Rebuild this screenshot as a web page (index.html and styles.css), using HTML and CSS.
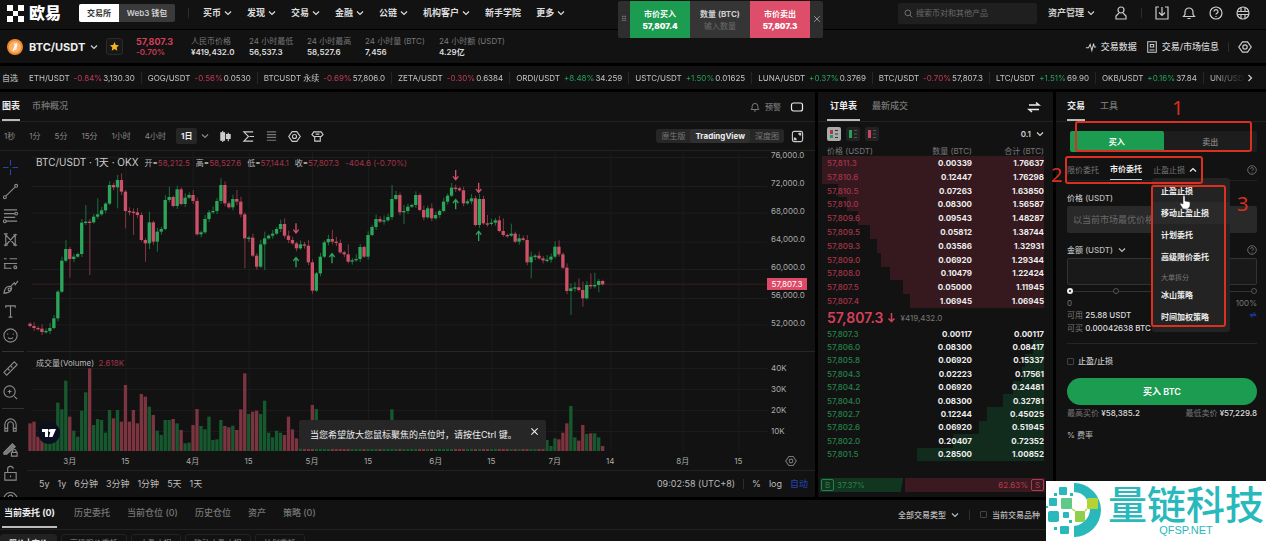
FILE: index.html
```html
<!DOCTYPE html>
<html lang="zh-CN">
  <head>
    <meta charset="utf-8">
    <title>BTC/USDT 57,807.3 | 欧易</title>
    <link rel="stylesheet" href="styles.css">
  </head>
  <body>
    <svg width="0" height="0" class="defs">
      <symbol id="chev" viewBox="0 0 8 8"><path d="M1 2.5l3 3 3-3"/></symbol>
      <symbol id="x" viewBox="0 0 10 10"><path d="M1.5 1.5l7 7M8.5 1.5l-7 7"/></symbol>
      <symbol id="help" viewBox="0 0 14 14"><circle cx="7" cy="7" r="6"/><path d="M5 5.5a2 2 0 1 1 2.8 1.9c-.6.3-.8.6-.8 1.2M7 10v.9"/></symbol>
      <symbol id="gear" viewBox="0 0 14 14"><path d="M4.5 1.8h5l3.7 5.2-3.7 5.2h-5L.8 7z"/><circle cx="7" cy="7" r="2.2"/></symbol>
      <symbol id="bell" viewBox="0 0 14 14"><path d="M1.5 10.5h11L11 8.500V6a4 4 0 0 0-8 0v2.500zM5.500 12.500h3"/></symbol>
    </svg>

    <header class="topbar">
      <a class="logo" href="#">
        <svg width="17" height="17" viewBox="0 0 17 17"><path d="M0 0h6v6h5V0h6v6h-6v5h6v6h-6v-6H6v6H0v-6h6V6H0z"/></svg>
        <span>欧易</span>
      </a>
      <div class="mode"><button class="on">交易所</button><button>Web3 钱包</button></div>
      <i class="sep"></i>
      <nav>
        <a href="#">买币<svg class="chev"><use href="#chev"/></svg></a>
        <a href="#">发现<svg class="chev"><use href="#chev"/></svg></a>
        <a href="#">交易<svg class="chev"><use href="#chev"/></svg></a>
        <a href="#">金融<svg class="chev"><use href="#chev"/></svg></a>
        <a href="#">公链<svg class="chev"><use href="#chev"/></svg></a>
        <a href="#">机构客户<svg class="chev"><use href="#chev"/></svg></a>
        <a href="#">新手学院</a>
        <a href="#">更多<svg class="chev"><use href="#chev"/></svg></a>
      </nav>
      <label class="search">
        <svg class="ico" viewBox="0 0 14 14"><circle cx="6" cy="6" r="4.500"/><path d="M9.500 9.500l3.500 3.500"/></svg>
        <input type="text" aria-label="搜索" placeholder="搜索币对和其他产品">
      </label>
      <a class="assets" href="#">资产管理<svg class="chev"><use href="#chev"/></svg></a>
      <div class="tools">
        <svg class="ico" viewBox="0 0 14 14"><circle cx="7" cy="4" r="3"/><path d="M5 7l-3 3v3h10v-3L9 7"/></svg>
        <i class="sep"></i>
        <svg class="ico" viewBox="0 0 14 14"><path d="M4 1H1v12h12V1h-3M7 1v8M4 6.500l3 3 3-3"/></svg>
        <svg class="ico"><use href="#bell"/></svg>
        <svg class="ico"><use href="#help"/></svg>
        <svg class="ico" viewBox="0 0 14 14"><circle cx="7" cy="7" r="6"/><path d="M1 5.500h12M1 8.500h12M5 1.500v4M9 1.500v4M5 8.500v4M9 8.500v4"/></svg>
      </div>
    </header>

    <div class="quick">
      <span class="grip">⠿</span>
      <button class="buy">市价买入<b>57,807.4</b></button>
      <label>数量 (BTC)<input type="text" placeholder="输入数量"></label>
      <button class="sell">市价卖出<b>57,807.3</b></button>
      <button class="close" aria-label="关闭"><svg class="chev"><use href="#x"/></svg></button>
    </div>

    <section class="ticker">
      <svg class="coin" width="16" height="16" viewBox="0 0 16 16"><circle cx="8" cy="8" r="8" fill="#f08a2c"/><circle cx="8" cy="8" r="6" fill="#f9b06a"/><path d="M9.500 4L6 12M7 5l3 1-1 2-2-.5 2 .5v2l-3 .5" fill="none" stroke="#fff" stroke-width="1.200"/></svg>
      <h1>BTC/USDT</h1>
      <svg class="chev"><use href="#chev"/></svg>
      <button class="star" aria-label="自选"><svg width="9" height="9" viewBox="0 0 10 10"><path d="M5 0l1.500 3.300 3.500.4-2.600 2.400.7 3.500L5 7.900 1.900 9.600l.7-3.500L0 3.700l3.500-.4z" fill="#f5b422"/></svg></button>
      <dl class="stat now"><dt>57,807.3</dt><dd>-0.70%</dd></dl>
      <dl class="stat"><dt>人民币价格</dt><dd>¥419,432.0</dd></dl>
      <dl class="stat"><dt>24 小时最低</dt><dd>56,537.3</dd></dl>
      <dl class="stat"><dt>24 小时最高</dt><dd>58,527.6</dd></dl>
      <dl class="stat wide"><dt>24 小时量 (BTC)</dt><dd>7,456</dd></dl>
      <dl class="stat wide"><dt>24 小时额 (USDT)</dt><dd>4.29亿</dd></dl>
      <div class="info">
        <a href="#"><svg class="ico" viewBox="0 0 14 14"><path d="M1 8h3l2-4 2 7 2-8 1 4h2"/></svg>交易数据</a>
        <a href="#"><svg class="ico" viewBox="0 0 14 14"><path d="M2 1h10v12H2zM4 10.500h6M5 4h4v3H5z"/></svg>交易/市场信息</a>
        <i class="sep"></i>
        <svg class="ico"><use href="#gear"/></svg>
      </div>
    </section>

    <div class="strip"><b>自选</b><ul id="strip"></ul><svg class="chev next"><use href="#chev"/></svg></div>

    <main>
      <div class="left">
        <section class="chart">
          <div class="tabs">
            <a class="on" href="#">图表</a><a href="#">币种概况</a>
            <span class="end"><svg class="ico sm"><use href="#bell"/></svg>预警<svg class="ico bright" viewBox="0 0 14 14"><rect x="1.500" y="3" width="11" height="8" rx="2"/></svg></span>
          </div>
          <div class="intervals">
            <button>1秒</button><button>1分</button><button>5分</button><button>15分</button><button>1小时</button><button>4小时</button><button class="on">1日</button>
            <svg class="chev"><use href="#chev"/></svg>
            <svg class="ico" viewBox="0 0 14 14"><path d="M4 1v2M4 11v2M10 3v2M10 9v3"/><path d="M2 3h4v8H2zM8 5h4v4H8z" fill="#ccc"/></svg>
            <svg class="ico" viewBox="0 0 14 14"><path d="M12 2H2l5 5-5 5h10M8 7h5"/></svg>
            <svg class="ico dim" viewBox="0 0 14 14"><path d="M2 2h10M2 5h10M2 8h10M2 11h10"/></svg>
            <svg class="ico"><use href="#gear"/></svg>
            <svg class="ico" viewBox="0 0 14 14"><path d="M1 5l2-3h8l2 3-2 2H3zM4 7v5h6V7M5 4.500h4"/></svg>
            <div class="views"><button>原生版</button><button class="on">TradingView</button><button>深度图</button></div>
            <svg class="ico expand" viewBox="0 0 14 14"><rect x="1.500" y="1.500" width="11" height="11" rx="2"/><path d="M8 4h2v2M6 10H4V8" stroke-width="2"/></svg>
          </div>
          <div class="work">
            <div class="rail">
              <svg class="cross" viewBox="0 0 18 18"><path d="M9 1v6M9 11v6M1 9h6M11 9h6"/></svg>
              <svg viewBox="0 0 18 18"><path d="M4 14L14 4"/><circle cx="3" cy="15" r="1.500"/><circle cx="15" cy="3" r="1.500"/></svg>
              <svg viewBox="0 0 18 18"><path d="M2 3h14M2 7h12M2 11h12M4 15h12"/><circle cx="15" cy="7" r="1.500"/><circle cx="3" cy="15" r="1.500"/></svg>
              <svg viewBox="0 0 18 18"><path d="M4 3v12L14 4v11L4 4M2 3h4M12 4h4M2 15h4M12 15h4"/></svg>
              <svg viewBox="0 0 18 18"><path d="M2 4h3M8 4h8M2 9h14M2 14h8M13 14h3M3 9v5"/><circle cx="14" cy="13" r="1.500"/></svg>
              <svg viewBox="0 0 18 18"><path d="M2 15c1-5 3-8 7-7 3 2 0 7-7 7zM9 8l4-4 1 2 3-4"/><circle cx="8" cy="11" r="1.500"/></svg>
              <svg viewBox="0 0 18 18"><path d="M4 5V3h10v2M9 3v12M7 15h4"/></svg>
              <svg viewBox="0 0 18 18"><circle cx="9" cy="9" r="7"/><path d="M6 7v1M12 7v1M6.500 11c1 2 4 2 5 0"/></svg>
              <hr>
              <svg viewBox="0 0 18 18"><path d="M2 13L13 2l3 3L5 16zM6 9l2 2M9 6l2 2"/></svg>
              <svg viewBox="0 0 18 18"><circle cx="8" cy="8" r="6"/><path d="M13 13l3 3M8 6v4M6 8h4"/></svg>
              <hr>
              <svg viewBox="0 0 18 18"><path d="M3 15V8a6 6 0 0 1 12 0v7h-3V8a3 3 0 0 0-6 0v7zM3 12h3M12 12h3"/></svg>
              <svg viewBox="0 0 18 18"><path d="M2 12L11 3l3 3-9 8H2z" fill="#777"/><path d="M10 12h6v4h-6zM11 12v-1a2 2 0 0 1 4 0v1"/></svg>
              <svg viewBox="0 0 18 18"><path d="M3 8h12v8H3zM6 8V5a3 3 0 0 1 6-1M9 11v2"/></svg>
              <svg viewBox="0 0 18 18"><path d="M2 9c3-7 11-7 14 0-3 6-11 6-14 0z"/><circle cx="9" cy="9" r="2.500"/></svg>
            </div>
            <div class="panes">
              <div class="pane price">
                <svg id="candles" class="plot" viewBox="81 78 2220 600" preserveAspectRatio="none"></svg>
                <div class="axis"><span>76,000.0</span><span>72,000.0</span><span>68,000.0</span><span>64,000.0</span><span>60,000.0</span><span>56,000.0</span><span>52,000.0</span></div>
                <p class="legend"><b>BTC/USDT · 1天 · OKX</b>开=<em>58,212.5</em>高=<em>58,527.6</em>低=<em>57,144.1</em>收=<em>57,807.3</em><em>-404.6 (-0.70%)</em></p>
                <span class="tag">57,807.3</span>
              </div>
              <div class="pane volume">
                <svg id="volume" class="plot" viewBox="81 36 2220 297" preserveAspectRatio="none"></svg>
                <div class="axis"><span>40K</span><span>30K</span><span>20K</span><span>10K</span></div>
                <p class="legend">成交量(Volume) &nbsp;<em>2.618K</em></p>
                <svg class="tv" width="22" height="22" viewBox="0 0 22 22"><circle cx="11" cy="11" r="11" fill="#0b1020"/><path d="M4 7h6v8H7v-5H4zM13 7h5l-3.500 8H11z" fill="#fff"/><circle cx="12" cy="8.500" r="1.500" fill="#fff"/></svg>
                <div class="hint">当您希望放大您鼠标聚焦的点位时，请按住Ctrl 键。<button aria-label="关闭"><svg width="9" height="9"><use href="#x"/></svg></button></div>
              </div>
              <div class="timeline"><svg id="dates" class="plot"></svg><svg class="ico dim"><use href="#gear"/></svg></div>
              <div class="ranges">
                <button>5y</button><button>1y</button><button>6分钟</button><button>3分钟</button><button>1分钟</button><button>5天</button><button>1天</button>
                <span class="clock">09:02:58 (UTC+8)</span><i class="sep"></i><button>%</button><button>log</button><button class="auto">自动</button>
              </div>
            </div>
          </div>
        </section>

        <section class="book">
          <div class="tabs">
            <a class="on" href="#">订单表</a><a href="#">最新成交</a>
            <span class="end"><svg class="ico bright" viewBox="0 0 14 14"><path d="M2 5h10L9 2.500M12 9.500H2L5 12" stroke-width="1.600"/></svg></span>
          </div>
          <div class="modes">
            <svg width="14" height="14" viewBox="0 0 14 14"><rect width="14" height="14" rx="2" fill="#aaa"/><path d="M3 3h3v4H3z" fill="#b34"/><path d="M3 8h3v3H3z" fill="#295"/><path d="M8 3.500h3M8 7h3M8 10.500h3" stroke="#333"/></svg>
            <svg width="14" height="14" viewBox="0 0 14 14"><rect width="14" height="14" rx="2" fill="#222"/><path d="M3 3h3v8H3z" fill="#2a9d58"/><path d="M8 3.500h3M8 7h3M8 10.500h3" stroke="#555"/></svg>
            <svg width="14" height="14" viewBox="0 0 14 14"><rect width="14" height="14" rx="2" fill="#222"/><path d="M3 3h3v8H3z" fill="#c8465f"/><path d="M8 3.500h3M8 7h3M8 10.500h3" stroke="#555"/></svg>
            <span>0.1<svg class="chev"><use href="#chev"/></svg></span>
          </div>
          <table class="asks">
            <thead><tr><th>价格 (USDT)</th><th>数量 (BTC)</th><th>合计 (BTC)</th></tr></thead>
            <tbody id="asks"></tbody>
          </table>
          <p class="last"><b>57,807.3</b><svg width="9" height="11" viewBox="0 0 9 11"><path d="M4.500 1v8M1.500 6.500l3 3 3-3"/></svg><span>¥419,432.0</span></p>
          <table class="bids"><tbody id="bids"></tbody></table>
          <div class="ratio"><div class="b"><i>B</i>37.37%</div><div class="s">62.63%<i>S</i></div></div>
        </section>

        <section class="orders">
          <div class="tabs">
            <a class="on" href="#">当前委托 (0)</a><a href="#">历史委托</a><a href="#">当前仓位 (0)</a><a href="#">历史仓位</a><a href="#">资产</a><a href="#">策略 (0)</a>
            <div class="filters"><button>全部交易类型<svg class="chev"><use href="#chev"/></svg></button><i class="sep"></i><label><input type="checkbox">当前交易品种</label></div>
          </div>
          <div class="chips"><button class="on">限价 | 市价</button><button>高级限价委托</button><button>止盈止损</button><button>移动止盈止损</button><button>计划委托</button></div>
        </section>
      </div>

      <section class="trade">
        <div class="tabs"><a class="on" href="#">交易</a><a href="#">工具</a></div>
        <form>
          <div class="side"><button type="button" class="on">买入</button><button type="button">卖出</button></div>
          <div class="types">
            <a href="#">限价委托</a><a class="on" href="#">市价委托</a><a href="#">止盈止损<svg class="chev up"><use href="#chev"/></svg></a>
            <svg class="ico help"><use href="#help"/></svg>
          </div>
          <label class="cap" for="price">价格 (USDT)</label>
          <input id="price" class="box" type="text" placeholder="以当前市场最优价格交易" disabled>
          <label class="cap" for="amount">金额 (USDT)<svg class="chev"><use href="#chev"/></svg><svg class="ico help"><use href="#help"/></svg></label>
          <input id="amount" class="box line" type="text">
          <div class="steps"><i class="on"></i><i></i><i></i><i></i><i></i></div>
          <div class="row"><span>0</span><span>100%</span></div>
          <div class="row"><span>可用 <b>25.88 USDT</b></span><svg class="swap" viewBox="0 0 12 12"><path d="M1 5h9L7 2M11 7H2l3 3"/></svg></div>
          <div class="row last-row"><span>可买 <b>0.00042638 BTC</b></span></div>
          <label class="tpsl"><input type="checkbox">止盈/止损</label>
          <button type="button" class="submit">买入 BTC</button>
          <div class="row limits"><span>最高买价 <b>¥58,385.2</b></span><span>最低卖价 <b>¥57,229.8</b></span></div>
          <a class="fee" href="#">% 费率</a>
        </form>
        <ul class="menu">
          <li>止盈止损</li><li class="hover">移动止盈止损</li><li>计划委托</li><li>高级限价委托</li><li class="group">大单拆分</li><li>冰山策略</li><li>时间加权策略</li>
        </ul>
        <svg class="hand" width="12" height="15" viewBox="0 0 12 15"><path d="M4 1c1-1 2 0 2 1v4l5 1v4l-2 3H4L1 9c0-1 1-1 3 0z" fill="#fff" stroke="#333" stroke-width=".5"/></svg>
        <div class="mark m1"></div><div class="mark m2"></div><div class="mark m3"></div>
        <span class="num n1">1</span><span class="num n2">2</span><span class="num n3">3</span>
      </section>
    </main>

    <div class="brand">
      <svg width="56" height="58" viewBox="0 0 56 58">
        <path d="M28 2a26 26 0 0 1 0 54V45a16 16 0 0 0 13-9h-5V17h4a16 16 0 0 0-12-6z" fill="#29b9bd"/>
        <path d="M28 12a16 16 0 0 1 0 32z" fill="#fff"/>
        <g fill="#29b9bd"><rect x="13" y="6" width="8" height="8" rx="1"/><rect x="3" y="17" width="8" height="8" rx="1"/><rect x="2" y="30" width="11" height="11" rx="2"/><rect x="14" y="45" width="9" height="8" rx="1"/><rect x="17" y="31" width="6" height="6" rx="1"/><rect x="8" y="12" width="3" height="3"/><rect x="24" y="12" width="3" height="3"/><rect x="0" y="25" width="2" height="2"/><rect x="8" y="46" width="3" height="3"/><rect x="23" y="39" width="3" height="3"/></g>
        <path d="M26 28l3 2M41 28l-2 2" stroke="#b4d234"/>
        <rect x="15" y="17" width="11" height="11" rx="1" fill="#5fc98a"/><rect x="41" y="17" width="11" height="11" rx="1" fill="#b4d234"/><rect x="29" y="30" width="10" height="11" rx="1" fill="#8fcf4c"/>
      </svg>
      <div><strong>量链科技</strong><small>QFSP.NET</small></div>
    </div>

    <script src="chart.js"></script>
  </body>
</html>
```
FILE: styles.css
```css
* { box-sizing: border-box; }
body {
  margin: 0;
  height: 100vh;
  overflow: hidden;
  display: flex;
  flex-direction: column;
  background: #000;
  color: #d0d0d0;
  font: 8px/12px Inter, "Noto Sans CJK SC", sans-serif;
}
a { color: inherit; text-decoration: none; }
button, input { font: inherit; color: inherit; background: none; border: 0; padding: 0; margin: 0; }
p, ul, dl, dd, h1 { margin: 0; padding: 0; list-style: none; }
.defs { position: absolute; }
svg { flex: none; fill: none; stroke: currentColor; stroke-width: 1.2; }
.chev { width: 8px; height: 8px; }
.ico { width: 14px; height: 14px; color: #ccc; }
.ico.dim { color: #777; }
.ico.sm { width: 10px; height: 10px; color: #888; }
.ico.bright { color: #eee; }
.sep { width: 1px; height: 10px; background: #2c2c2c; }

/* top bar */
.topbar { flex: none; height: 29px; padding: 0 16px 3px 7px; display: flex; align-items: center; background: #121212; }
.logo { display: flex; align-items: center; gap: 5px; margin-right: 18px; color: #fff; font-size: 16px; font-weight: 900; }
.logo svg { fill: #fff; stroke: none; }
.mode { display: flex; height: 18px; background: #3a3a3a; border-radius: 2px; overflow: hidden; }
.mode button { width: 56px; font-weight: 600; }
.mode .on { width: 40px; background: #fff; color: #333; }
.topbar > .sep { margin: 0 14px 0 13px; }
nav { display: flex; gap: 15px; font-size: 9px; font-weight: 700; color: #ddd; white-space: nowrap; }
nav a, .assets { display: flex; align-items: center; gap: 3px; }
.search { margin-left: auto; width: 139px; height: 21px; padding: 0 6px; display: flex; align-items: center; gap: 3px; background: #1f1f1f; border-radius: 2px; }
.search .ico { width: 9px; height: 9px; color: #888; }
.search input { width: 110px; }
input::placeholder { color: #6a6a6a; opacity: 1; }
.assets { margin: 0 19px 0 11px; font-size: 9px; font-weight: 700; }
.tools { display: flex; align-items: center; gap: 13px; }

.quick { position: absolute; left: 618px; top: 1px; height: 37px; display: flex; background: #2e2e2e; border-radius: 2px; text-align: center; }
.grip { width: 12px; line-height: 37px; color: #888; }
.quick button, .quick label { width: 60px; font-weight: 700; display: block; }
.quick b { display: block; }
.quick input { display: block; width: 100%; text-align: center; font-weight: 400; }
.quick label { padding-top: 7px; background: #353535; }
.quick .buy { background: #1b9c50; color: #fff; }
.quick .sell { background: #de4d69; color: #fff; }
.quick .close { width: 13px; color: #999; }

/* pair summary */
.ticker { flex: none; height: 33px; margin-top: 1px; padding: 0 14px 0 7px; display: flex; align-items: center; background: #121212; }
.coin { stroke: none; margin-right: 6px; }
h1 { width: 61px; font-size: 11px; font-weight: 700; color: #eee; }
.star { width: 17px; height: 17px; margin: 0 13px 0 8px; border: 1px solid #2a2a2a; border-radius: 3px; background: #181818; line-height: 0; }
.star svg { stroke: none; }
.stat { width: 58px; line-height: 11px; white-space: nowrap; color: #ddd; font-weight: 600; }
.stat dt { color: #777; font-weight: 400; }
.stat.wide { width: 74px; }
.stat.now { width: 55px; color: #c43a53; }
.stat.now dt { color: #d5405b; font-size: 9px; font-weight: 700; }
.info { margin-left: auto; display: flex; align-items: center; gap: 9px; font-size: 9px; font-weight: 500; }
.info a { display: flex; align-items: center; gap: 4px; }
.info .ico { width: 12px; height: 12px; }
.info > .ico { width: 14px; height: 14px; }

.strip { flex: none; height: 23px; margin: 3px 0; padding: 0 12px 0 2px; display: flex; align-items: center; background: #121212; white-space: nowrap; }
.strip > b { width: 27px; font-weight: 500; color: #aaa; }
.strip ul { flex: 1; display: flex; overflow: hidden; color: #c4c4c4; -webkit-mask-image: linear-gradient(to right, #000 97%, transparent); }
.strip li { padding-right: 6px; margin-right: 6px; border-right: 1px solid #262626; }
.strip li:last-child { border: 0; margin: 0; padding: 0; }
.strip i { font-style: normal; margin: 0 1px 0 4px; }
.down { color: #c43a53; }
.rise { color: #25a05a; }
.next { transform: rotate(-90deg); }

/* layout */
main { flex: 1; display: flex; gap: 3px; }
.left { flex: 1; display: grid; grid-template: 405px 1fr / 1fr 235px; gap: 3px; }
.chart, .book, .orders, .trade { background: #121212; }
.chart { display: flex; flex-direction: column; min-width: 0; }
.orders { grid-column: 1 / 3; }
.tabs { height: 30px; display: flex; gap: 12px; padding: 0 0 0 2px; border-bottom: 1px solid #222; font-size: 9px; font-weight: 500; line-height: 28px; color: #777; }
.tabs a.on { color: #eee; font-weight: 700; border-bottom: 2px solid #bbb; }
.tabs .end { margin-left: auto; padding-right: 11px; display: flex; align-items: center; gap: 5px; font-size: 8px; }
.tabs .end .bright { margin-left: 4px; }

.intervals { height: 29px; padding: 0 11px 0 4px; display: flex; align-items: center; gap: 10px; border-bottom: 1px solid #222; color: #888; }
.intervals > button { margin-right: 4px; }
.intervals > .on { background: #262626; border-radius: 2px; padding: 2px 5px; margin: 0 -6px 0 -4px; color: #eee; font-weight: 700; }
.intervals .ico { width: 13px; height: 13px; }
.views { margin-left: auto; margin-right: -3px; display: flex; background: #262626; border-radius: 3px; }
.views button { padding: 1px 5px; color: #777; }
.views .on { color: #eee; font-weight: 700; background: #303030; border-radius: 3px; }

.work { flex: 1; display: flex; min-height: 0; }
.rail { width: 29px; padding: 8px 0 0 2px; overflow: hidden; color: #8a8a8a; }
.rail svg { display: block; width: 17px; height: 17px; margin-bottom: 7px; }
.rail hr { width: 22px; margin: 0 0 8px; border: 0; border-top: 1px solid #333; }
.rail .cross { color: #2446a8; }
.panes { flex: 1; min-width: 0; margin-left: -2px; }
.pane { position: relative; display: flex; }
.price { height: 201px; border-bottom: 1px solid #262626; }
.volume { height: 99px; }
.plot { flex: 1; min-width: 0; height: 100%; stroke: none; }
.axis { width: 48px; padding-left: 4px; color: #aaa; display: flex; flex-direction: column; }
.axis span { flex: none; height: 28px; line-height: 28px; }
.price .axis { margin-top: -10px; }
.volume .axis { padding-top: 6px; }
.volume .axis span { height: 21px; line-height: 21px; }
.legend { position: absolute; left: 9px; top: 5px; color: #bbb; white-space: nowrap; }
.legend b { font-size: 10px; font-weight: 400; color: #ccc; margin-right: 6px; }
.legend em { font-style: normal; color: #a53348; margin-right: 6px; }
.tag { position: absolute; right: 8px; top: 127px; width: 40px; text-align: center; background: #dd4a68; color: #fff; }
.tv { position: absolute; left: 11px; top: 70px; stroke: none; }
.hint { position: absolute; left: 272px; top: 68px; width: 247px; height: 29px; padding: 0 7px 0 11px; display: flex; align-items: center; justify-content: space-between; background: #262626; border-radius: 2px; color: #eee; font-size: 9px; white-space: nowrap; }
.hint button { line-height: 0; padding-bottom: 7px; }
.timeline { height: 20px; display: flex; align-items: center; border-bottom: 1px solid #222; }
.timeline .ico { width: 12px; height: 12px; margin: 0 18px; }
.timeline text { fill: #aaa; text-anchor: middle; }
.ranges { height: 26px; padding: 0 7px 0 12px; display: flex; align-items: center; gap: 8px; color: #bbb; font-size: 9px; }
.ranges .clock { margin-left: auto; }
.ranges .auto { color: #2444b8; }

/* order book */
.book .tabs { padding-left: 9px; }
.book .tabs a.on { padding: 0 3px; }
.book .tabs .end { padding-right: 12px; }
.modes { height: 24px; padding: 0 9px; display: flex; align-items: center; gap: 5px; }
.modes > svg { stroke: none; stroke-width: 1; }
.modes span { margin-left: auto; display: flex; align-items: center; gap: 5px; font-weight: 600; }
.book table { width: 222px; margin-left: 4px; table-layout: fixed; border-collapse: collapse; line-height: 10px; color: #eee; font-weight: 700; text-align: right; }
.book th, .book td { padding: 0; }
.book th { font-weight: 400; color: #777; }
.book th:first-child, .book td:first-child { text-align: left; padding-left: 5px; width: 80px; }
.book th:last-child, .book td:last-child { width: 72px; }
.asks { height: 162px; }
.bids { height: 134px; }
.asks td:first-child { color: #a8344a; font-weight: 500; }
.bids td:first-child { color: #25834a; font-weight: 500; }
.asks tbody tr { background: linear-gradient(to left, #35191e var(--depth), transparent var(--depth)); }
.bids tr { background: linear-gradient(to left, #112c1d var(--depth), transparent var(--depth)); }
.last { height: 19px; padding-left: 9px; display: flex; align-items: center; gap: 3px; color: #777; }
.last b { font-size: 14px; font-weight: 600; color: #d5405b; }
.last svg { color: #d5405b; stroke-width: 1.5; margin-right: 2px; }
.ratio { display: flex; gap: 2px; height: 14px; margin: 17px 8px 0 2px; line-height: 14px; }
.ratio div { padding: 0 1px; display: flex; gap: 3px; align-items: center; }
.ratio .b { width: 37%; background: #12351f; color: #25834a; clip-path: polygon(0 0, 100% 0, 97% 100%, 0 100%); }
.ratio .s { flex: 1; justify-content: flex-end; background: #3a1a20; color: #b23a50; }
.ratio i { width: 13px; height: 12px; line-height: 10px; border: 1px solid; border-radius: 2px; font-style: normal; text-align: center; }

/* orders */
.orders .tabs { gap: 17px; line-height: 26px; }
.orders .tabs a { height: 28px; }
.orders .tabs a.on { padding: 0 2px; }
.filters { margin-left: auto; padding-right: 13px; display: flex; align-items: center; gap: 10px; font-size: 8px; color: #bbb; }
.filters button, .filters label { display: flex; align-items: center; gap: 5px; font-weight: 500; }
input[type=checkbox] { appearance: none; width: 7px; height: 7px; border: 1px solid #444; border-radius: 1px; }
.chips { display: flex; gap: 4px; padding-top: 4px; color: #888; }
.chips button { height: 18px; padding: 0 8px; border: 1px solid #222; border-radius: 3px; }
.chips .on { background: #222; color: #ddd; font-weight: 700; }

/* trade form */
.trade { position: relative; width: 210px; }
.trade .tabs { padding-left: 11px; gap: 15px; }
form { padding: 9px 9px 0 11px; }
.side { display: flex; height: 21px; margin-left: 3px; background: #1d1d1d; border-radius: 2px; font-weight: 600; color: #777; }
.side button { flex: 1; }
.side .on { background: #1b9c50; color: #fff; border-radius: 2px; }
.types { height: 29px; padding-top: 7px; display: flex; gap: 11px; border-bottom: 1px solid #222; line-height: 20px; color: #777; }
.types a { display: flex; align-items: center; gap: 4px; }
.types .on { color: #eee; font-weight: 700; border-bottom: 1px solid #ccc; }
.up { transform: rotate(180deg); color: #eee; }
.help { width: 10px; height: 10px; margin-left: auto; color: #777; align-self: center; }
.cap { display: flex; align-items: center; gap: 5px; height: 25px; padding-top: 9px; font-weight: 500; color: #bbb; }
.box { display: block; width: 100%; height: 27px; padding: 0 6px; background: #292929; border-radius: 2px; font-size: 9px; }
.box.line { background: #191919; border: 1px solid #333; }
.steps { height: 12px; display: flex; align-items: center; justify-content: space-between; background: linear-gradient(#333, #333) center / 100% 1px no-repeat; }
.steps i { width: 6px; height: 6px; border: 1px solid #555; border-radius: 50%; background: #121212; }
.steps .on { border: 2px solid #eee; }
.row { display: flex; justify-content: space-between; align-items: center; height: 12px; color: #777; }
.row b { font-weight: 500; color: #ddd; }
.swap { width: 8px; height: 8px; color: #2444d8; }
.last-row { height: 23px; padding-bottom: 8px; border-bottom: 1px solid #262626; }
.tpsl { display: flex; align-items: center; gap: 4px; height: 34px; font-weight: 500; color: #ccc; }
.submit { width: 100%; height: 27px; border-radius: 14px; background: #1b9c50; color: #fff; font-size: 9px; font-weight: 600; }
.limits { height: 16px; }
.fee { display: block; margin-top: 8px; color: #bbb; }

.menu { position: absolute; left: 96px; top: 86px; width: 78px; padding: 2px 0 4px; background: #232323; border-radius: 3px; font-weight: 600; color: #eee; }
.menu li { height: 22px; line-height: 22px; padding-left: 9px; }
.menu .hover { background: #2a2a2a; }
.menu .group { height: 16px; font-size: 7px; line-height: 20px; font-weight: 400; color: #777; }
.hand { position: absolute; left: 123px; top: 103px; }

.mark { position: absolute; border: 2px solid #d9301f; border-radius: 3px; }
.m1 { left: 19px; top: 29px; width: 177px; height: 31px; }
.m2 { left: 9px; top: 64px; width: 138px; height: 28px; }
.m3 { left: 95px; top: 93px; width: 75px; height: 142px; }
.num { position: absolute; color: #d9301f; font: 20px/24px "Noto Sans", sans-serif; }
.n1 { left: 116px; top: 4px; }
.n2 { left: -5px; top: 71px; }
.n3 { left: 181px; top: 100px; }

.brand { position: absolute; right: 0; bottom: 0; width: 220px; height: 60px; display: flex; gap: 6px; background: #fff; color: #29b9bd; white-space: nowrap; }
.brand svg { stroke: none; }
.brand div { text-align: center; }
.brand strong { display: block; font: 500 39px/42px "Noto Sans CJK SC", sans-serif; }
.brand small { display: block; font: 11px/14px "Liberation Sans", sans-serif; }
```
FILE: chart.js
```js
var UP = '#2ba65a', DOWN = '#cf5069', VUP = '#17592f', VDOWN = '#7c3440';
var X0 = 90, STEP = 11.93;

// closes, in plot units (3 per pixel), one for each day
var closes = [
  603, 609, 611, 621, 618, 609, 580, 500, 407, 372, 402, 395, 387, 293, 290, 292, 275, 268, 256, 236,
  180, 187, 165, 200, 258, 260, 262, 270, 345, 355, 292, 350, 320, 312, 225, 216, 243, 193, 237, 218,
  210, 228, 328, 322, 282, 262, 258, 228, 180, 235, 247, 222, 230, 268, 340, 338, 392, 425, 358, 340,
  332, 326, 312, 297, 332, 345, 355, 370, 358, 362, 412, 497, 445, 395, 352, 342, 350, 354, 382, 388,
  410, 406, 402, 366, 395, 330, 306, 282, 290, 286, 276, 222, 210, 262, 258, 245, 240, 210, 255, 277,
  250, 280, 270, 258, 230, 212, 188, 190, 196, 235, 229, 220, 300, 222, 295, 297, 293, 286, 318, 330,
  332, 326, 350, 340, 345, 412, 395, 392, 400, 406, 404, 395, 365, 388, 428, 498, 490, 487, 495, 520,
  480, 484, 480, 468, 478
];
// long wicks: index -> [high, low]
var wicks = {
  9: [345, 412], 10: [366, 458], 14: [240, 300], 15: [282, 450], 17: [220, 282], 22: [150, 250], 23: [145, 210],
  24: [195, 310], 26: [250, 330], 29: [340, 410], 30: [260, 372], 32: [308, 380], 35: [185, 232], 48: [160, 236],
  52: [195, 240], 54: [262, 430], 59: [320, 435], 64: [280, 340], 70: [345, 420], 76: [315, 358], 80: [358, 415],
  91: [180, 284], 94: [240, 297], 115: [270, 305], 119: [280, 335], 121: [296, 335], 126: [380, 460],
  132: [348, 400], 133: [346, 395], 136: [475, 570], 138: [460, 500], 139: [470, 545], 141: [445, 492], 142: [443, 490], 143: [462, 502]
};
var volumes = [
  250, 245, 290, 295, 300, 290, 280, 188, 208, 122, 230, 272, 290, 212, 157, 85, 255, 237, 240, 278,
  210, 235, 210, 245, 135, 245, 210, 250, 162, 170, 200, 225, 272, 285, 240, 240, 237, 250, 270, 310,
  308, 255, 207, 258, 268, 230, 300, 298, 240, 258, 262, 257, 270, 208, 100, 222, 215, 212, 222, 182,
  278, 292, 272, 278, 285, 230, 268, 295, 320, 300, 280, 195, 207
];
while (volumes.length < 130) volumes.push(volumes.length === 91 ? 208 : 280);
volumes = volumes.concat([300, 318, 295, 298, 278, 250, 198, 292, 302, 255, 282, 280, 280, 292, 318]);

function rect(x, y, w, h, fill) {
  return '<rect x="' + x + '" y="' + y + '" width="' + w + '" height="' + h + '" fill="' + fill + '"/>';
}

var days = [[209, '3月'], [376, '15'], [578, '4月'], [746, '15'], [936, '5月'], [1104, '15'], [1307, '6月'], [1474, '15'], [1664, '7月'], [1831, '14'], [2048, '8月'], [2215, '15']];
var price = '', vol = '', labels = '';

days.forEach(function (d) {
  price += rect(d[0], 78, 3, 600, '#1b1b1b');
  vol += rect(d[0], 36, 3, 297, '#1b1b1b');
  labels += '<text x="' + (d[0] - 81) / 22.2 + '%" y="13">' + d[1] + '</text>';
});
[96, 183, 263, 350, 432, 519, 598].forEach(function (y) { price += rect(95, y, 2206, 3, '#1d1d1d'); });
[84, 147, 210, 273].forEach(function (y) { vol += rect(95, y, 2206, 3, '#1b1b1b'); });
price += rect(95, 476, 2206, 3, '#3a1d22');

closes.forEach(function (close, i) {
  var open = i ? closes[i - 1] : 596;
  var up = close < open;
  var x = X0 + i * STEP;
  var top = Math.min(open, close), bottom = Math.max(open, close, top + 4);
  var wick = wicks[i] || [top - 4 - i * 7 % 12, bottom + 4 + i * 5 % 10];
  price += rect(x - 1, wick[0], 3, wick[1] - wick[0], up ? '#1d6e3e' : '#853646');
  price += rect(x - 5, top, 10, bottom - top, up ? UP : DOWN);
  vol += rect(x - 5, volumes[i], 10, 333 - volumes[i], up ? VUP : VDOWN);
});

// trade marks: [x, y, direction]
[[888, 310, 1], [888, 412, -1], [996, 400, -1], [1367, 150, 1], [1367, 238, -1], [1436, 188, 1], [1436, 333, -1]].forEach(function (m) {
  var x = m[0], y = m[1], d = m[2];
  price += '<path d="M' + x + ' ' + (y - 15 * d) + 'V' + (y + 13 * d) + 'M' + (x - 8) + ' ' + (y + 4 * d) + 'L' + x + ' ' + (y + 14 * d) + 'L' + (x + 8) + ' ' + (y + 4 * d) +
    '" fill="none" stroke-width="4" stroke="' + (d > 0 ? DOWN : UP) + '"/>';
});

document.getElementById('candles').innerHTML = price;
document.getElementById('volume').innerHTML = vol;
document.getElementById('dates').innerHTML = labels;

var asks = [
  ['57,811.3', '0.00339', '1.76637'], ['57,810.6', '0.12447', '1.76298'], ['57,810.5', '0.07263', '1.63850'],
  ['57,810.0', '0.08300', '1.56587'], ['57,809.6', '0.09543', '1.48287'], ['57,809.5', '0.05812', '1.38744'],
  ['57,809.3', '0.03586', '1.32931'], ['57,809.0', '0.06920', '1.29344'], ['57,808.0', '0.10479', '1.22424'],
  ['57,807.5', '0.05000', '1.11945'], ['57,807.4', '1.06945', '1.06945']
];
var bids = [
  ['57,807.3', '0.00117', '0.00117'], ['57,806.0', '0.08300', '0.08417'], ['57,805.8', '0.06920', '0.15337'],
  ['57,804.3', '0.02223', '0.17561'], ['57,804.2', '0.06920', '0.24481'], ['57,804.0', '0.08300', '0.32781'],
  ['57,802.7', '0.12244', '0.45025'], ['57,802.6', '0.06920', '0.51945'], ['57,802.0', '0.20407', '0.72352'],
  ['57,801.5', '0.28500', '1.00852']
];
function fill(id, rows) {
  document.getElementById(id).innerHTML = rows.map(function (r) {
    return '<tr style="--depth: ' + (r[2] / 1.76637 * 100).toFixed(1) + '%"><td>' + r.join('</td><td>') + '</td></tr>';
  }).join('');
}
fill('asks', asks);
fill('bids', bids);

var watch = [
  ['ETH/USDT', '-0.84%', '3,130.30'], ['GOG/USDT', '-0.56%', '0.0530'], ['BTCUSDT 永续', '-0.69%', '57,806.0'],
  ['ZETA/USDT', '-0.30%', '0.6384'], ['ORDI/USDT', '+8.48%', '34.259'], ['USTC/USDT', '+1.50%', '0.01625'],
  ['LUNA/USDT', '+0.37%', '0.3769'], ['BTC/USDT', '-0.70%', '57,807.3'], ['LTC/USDT', '+1.51%', '69.90'],
  ['OKB/USDT', '+0.16%', '37.84'], ['UNI/USDT']
];
document.getElementById('strip').innerHTML = watch.map(function (w) {
  if (!w[1]) return '<li>' + w[0] + '</li>';
  return '<li>' + w[0] + '<i class="' + (w[1][0] === '-' ? 'down' : 'rise') + '">' + w[1] + '</i>' + w[2] + '</li>';
}).join('');
```
